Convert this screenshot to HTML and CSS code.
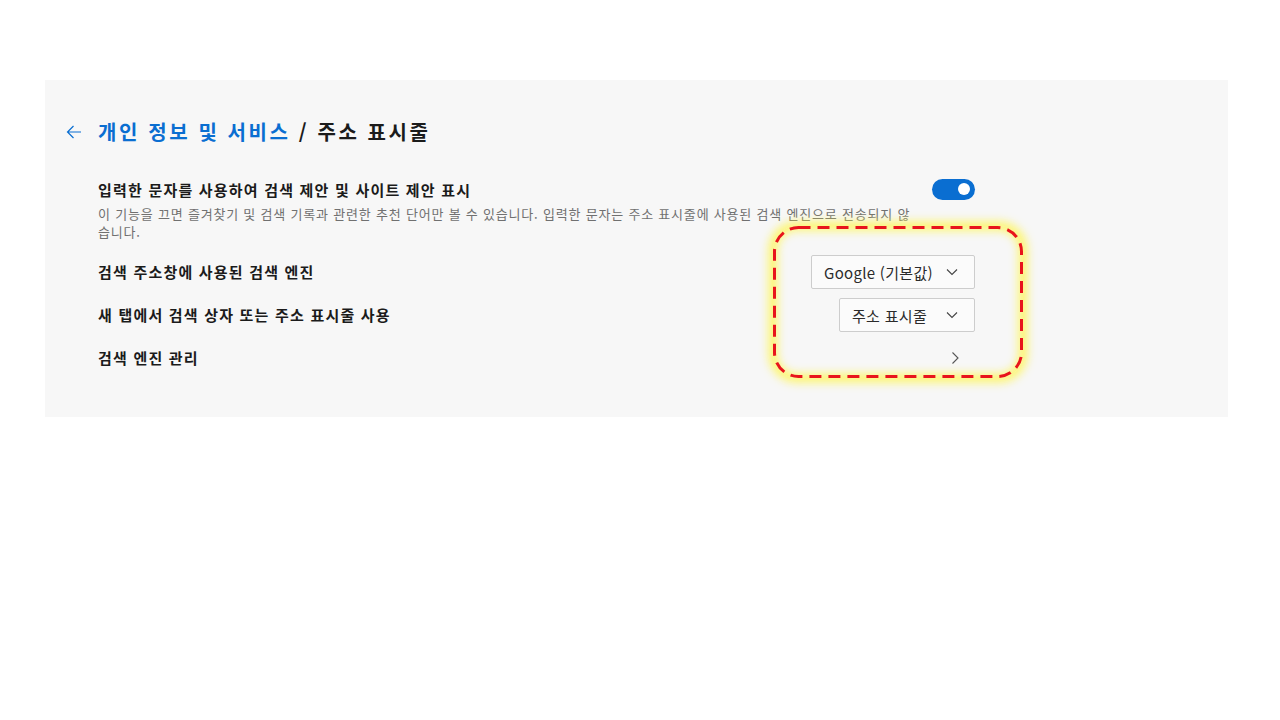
FILE: index.html
```html
<!DOCTYPE html>
<html lang="ko">
<head>
<meta charset="utf-8">
<title>주소 표시줄</title>
<link rel="stylesheet" href="styles.css">
</head>
<body>
<div class="page">
  <section class="panel">
    <header class="crumb">
      <svg class="back" width="16" height="16" viewBox="0 0 16 16" aria-hidden="true">
        <path d="M15 8H1.5M7.5 2L1.5 8l6 6" fill="none" stroke="#0a6ed1" stroke-width="1.2"/>
      </svg>
      <h1 class="crumb-title"><span class="crumb-link">개인 정보 및 서비스</span> / 주소 표시줄</h1>
    </header>
    <div class="list">
      <div class="row row-top">
        <div class="row-text">
          <div class="label">입력한 문자를 사용하여 검색 제안 및 사이트 제안 표시</div>
          <div class="desc">이 기능을 끄면 즐겨찾기 및 검색 기록과 관련한 추천 단어만 볼 수 있습니다. 입력한 문자는 주소 표시줄에 사용된 검색 엔진으로 전송되지 않습니다.</div>
        </div>
        <div class="toggle"><span class="knob"></span></div>
      </div>
      <div class="row">
        <div class="label">검색 주소창에 사용된 검색 엔진</div>
        <div class="select select-wide">Google (기본값)
          <svg class="chev" width="12" height="12" viewBox="0 0 12 12"><path d="M1 3.5l5 5 5-5" fill="none" stroke="#444" stroke-width="1.1"/></svg>
        </div>
      </div>
      <div class="row">
        <div class="label">새 탭에서 검색 상자 또는 주소 표시줄 사용</div>
        <div class="select">주소 표시줄
          <svg class="chev" width="12" height="12" viewBox="0 0 12 12"><path d="M1 3.5l5 5 5-5" fill="none" stroke="#444" stroke-width="1.1"/></svg>
        </div>
      </div>
      <div class="row">
        <div class="label">검색 엔진 관리</div>
        <svg class="arrow-right" width="12" height="14" viewBox="0 0 12 14"><path d="M3.5 1.5l5.5 5.5-5.5 5.5" fill="none" stroke="#555" stroke-width="1.1"/></svg>
      </div>
    </div>
    <div class="highlight">
      <svg class="highlight-line" width="250" height="152" viewBox="0 0 250 152" aria-hidden="true">
        <rect x="1.5" y="1.5" width="247" height="149" rx="24" ry="24" fill="none" stroke="#e8141c" stroke-width="3" stroke-dasharray="12 7"/>
      </svg>
    </div>
  </section>
</div>
</body>
</html>
```
FILE: styles.css
```css
html, body {
  margin: 0;
  padding: 0;
  background: #ffffff;
}
body {
  font-family: "Noto Sans CJK KR", "Noto Sans", sans-serif;
  color: #1b1b1b;
}
.page {
  padding: 80px 52px 0 45px;
}
.panel {
  position: relative;
  background: #f7f7f7;
  height: 337px;
  box-sizing: border-box;
  padding: 38px 253px 0 21px;
}
.crumb {
  display: flex;
  align-items: center;
  gap: 16px;
  height: 28px;
}
.back {
  flex: none;
}
.crumb-title {
  margin: 0;
  font-size: 20px;
  font-weight: 700;
  line-height: 28px;
  color: #1b1b1b;
  letter-spacing: 2.6px;
}
.crumb-link {
  color: #0a6ed1;
}
.list {
  margin: 33px 0 0 32px;
  display: flex;
  flex-direction: column;
  gap: 9px;
}
.row {
  display: flex;
  align-items: center;
  justify-content: space-between;
  min-height: 34px;
}
.row-top {
  align-items: flex-start;
  margin-bottom: 5px;
}
.row-text {
  width: 816px;
}
.label {
  font-size: 15px;
  font-weight: 700;
  line-height: 22px;
  color: #1b1b1b;
  letter-spacing: 1.2px;
}
.desc {
  margin-top: 4px;
  font-size: 13px;
  line-height: 18px;
  color: #707070;
  letter-spacing: 0.8px;
}
.toggle {
  width: 43px;
  height: 21px;
  border-radius: 11px;
  background: #0a6ed1;
  position: relative;
  flex: none;
}
.knob {
  position: absolute;
  right: 5px;
  top: 4px;
  width: 12px;
  height: 12px;
  border-radius: 50%;
  background: #fff;
}
.select {
  display: flex;
  align-items: center;
  justify-content: space-between;
  box-sizing: border-box;
  height: 34px;
  width: 136px;
  padding: 0 16px 0 12px;
  border: 1px solid #cdcdcd;
  border-radius: 2px;
  background: #fbfbfb;
  font-size: 15px;
  letter-spacing: 0.3px;
  color: #2b2b2b;
}
.select-wide {
  width: 164px;
}
.arrow-right {
  margin-right: 14px;
}
.highlight {
  position: absolute;
  left: 728px;
  top: 146px;
  width: 250px;
  height: 152px;
  border-radius: 24px;
  box-shadow: 0 0 8px 5px rgba(255, 245, 70, 0.7), inset 0 0 8px 5px rgba(255, 245, 70, 0.7);
  pointer-events: none;
}
.highlight-line {
  display: block;
}
```
